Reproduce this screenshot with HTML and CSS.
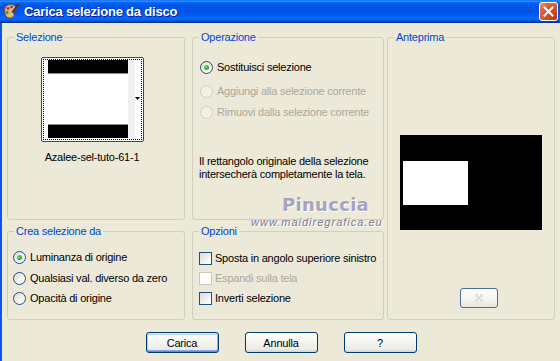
FILE: index.html
```html
<!DOCTYPE html>
<html lang="it">
<head>
<meta charset="utf-8">
<title>Carica selezione da disco</title>
<link rel="stylesheet" href="styles.css">
</head>
<body>
<div class="window">
  <div class="titlebar">
    <svg class="appicon" width="16" height="17" viewBox="0 0 16 17">
      <path d="M2 5 C3 1.5 9 0.5 12 3 C14 5 12 7 10.5 7.5 C9 8 10 10 11 11 C12 13 9 15.5 6 15 C2.5 14.5 0.8 9 2 5 Z" fill="#E9B47A" stroke="#8A4A1E" stroke-width="1"/>
      <circle cx="5" cy="5.5" r="1.4" fill="#D42A1C"/>
      <circle cx="8.5" cy="4" r="1.3" fill="#1E4FD0"/>
      <circle cx="4.2" cy="9.5" r="1.4" fill="#2F9A3A"/>
      <circle cx="7" cy="12.5" r="1.2" fill="#E8D020"/>
      <path d="M15 1.5 L9 10" stroke="#5A2E10" stroke-width="2" stroke-linecap="round"/>
      <path d="M9.5 9.5 L7.5 12.5" stroke="#C0C0C0" stroke-width="2"/>
    </svg>
    <span class="title">Carica selezione da disco</span>
    <div class="close">
      <svg width="11" height="11" viewBox="0 0 11 11"><path d="M1.5 1.5 L9.5 9.5 M9.5 1.5 L1.5 9.5" stroke="#fff" stroke-width="2" stroke-linecap="square"/></svg>
    </div>
  </div>
  <div class="content">
    <div class="groups">
      <fieldset class="sel">
        <legend>Selezione</legend>
        <div class="sel-in">
          <div class="thumb">
            <div class="thumb-in">
              <div class="img">
                <div class="bar"></div>
                <div class="line"></div>
                <div class="white"></div>
                <div class="line"></div>
                <div class="bar"></div>
              </div>
              <div class="strip"></div>
              <div class="arrowcol">
                <svg width="5" height="3" viewBox="0 0 5 3"><path d="M0 0 H5 L2.5 3 Z" fill="#000"/></svg>
              </div>
            </div>
          </div>
          <div class="sel-name">Azalee-sel-tuto-61-1</div>
        </div>
      </fieldset>

      <fieldset class="op">
        <legend>Operazione</legend>
        <div class="op-in">
          <div class="opt r1"><span class="radio"><span class="dot"></span></span><span>Sostituisci selezione</span></div>
          <div class="opt r2 disabled"><span class="radio"></span><span>Aggiungi alla selezione corrente</span></div>
          <div class="opt r3 disabled"><span class="radio"></span><span>Rimuovi dalla selezione corrente</span></div>
          <p class="note">Il rettangolo originale della selezione<br>intersecherà completamente la tela.</p>
        </div>
      </fieldset>

      <fieldset class="prev">
        <legend>Anteprima</legend>
        <div class="prev-in">
          <div class="canvas"><div class="sel-rect"></div></div>
          <div class="smallbtn">
            <svg width="14" height="8" viewBox="0 0 14 8">
              <rect x="3" y="0" width="3" height="3" fill="#E2E2DC"/>
              <rect x="8" y="0" width="3" height="3" fill="#E2E2DC"/>
              <rect x="5.5" y="2.5" width="3" height="3" fill="#D8D8D2"/>
              <rect x="3" y="5" width="3" height="3" fill="#E2E2DC"/>
              <rect x="8" y="5" width="3" height="3" fill="#E2E2DC"/>
            </svg>
          </div>
        </div>
      </fieldset>

      <fieldset class="crea">
        <legend>Crea selezione da</legend>
        <div class="crea-in">
          <div class="opt c1"><span class="radio"><span class="dot"></span></span><span>Luminanza di origine</span></div>
          <div class="opt c2"><span class="radio"></span><span>Qualsiasi val. diverso da zero</span></div>
          <div class="opt c3"><span class="radio"></span><span>Opacità di origine</span></div>
        </div>
      </fieldset>

      <fieldset class="opz">
        <legend>Opzioni</legend>
        <div class="opz-in">
          <div class="opt k1"><span class="check"></span><span>Sposta in angolo superiore sinistro</span></div>
          <div class="opt k2 disabled"><span class="check"></span><span>Espandi sulla tela</span></div>
          <div class="opt k3"><span class="check"></span><span>Inverti selezione</span></div>
        </div>
      </fieldset>
    </div>

    <div class="buttons">
      <button class="btn default">Carica</button>
      <button class="btn">Annulla</button>
      <button class="btn">?</button>
    </div>
  </div>

  <div class="wm-name">Pinuccia</div>
  <div class="wm-url">www.maidiregrafica.eu</div>
</div>
</body>
</html>
```

FILE: styles.css
```css
* { box-sizing: border-box; }

html, body {
  margin: 0;
  padding: 0;
}

body {
  width: 560px;
  height: 361px;
  overflow: hidden;
  background: #ECE9D8;
  font-family: "Liberation Sans", Arial, sans-serif;
  font-size: 11px;
  letter-spacing: -0.22px;
  color: #000;
}

.window {
  position: relative;
  width: 560px;
  height: 361px;
  background: #ECE9D8;
}

.titlebar {
  height: 23px;
  display: flex;
  align-items: center;
  padding-left: 3px;
  background: linear-gradient(to bottom, #0058EE 0%, #3593FF 4%, #288EFF 6%, #127DFF 8%, #036FFC 10%, #0262EE 14%, #0057E5 20%, #0054E3 24%, #0055EB 56%, #005BF5 66%, #026AFE 76%, #0062EF 86%, #0052D6 92%, #0040AB 94%, #003092 100%);
}

.appicon { flex: none; }

.title {
  margin-left: 5px;
  color: #fff;
  font-family: "Liberation Sans", Arial, sans-serif;
  font-weight: bold;
  font-size: 13px;
  text-shadow: 1px 1px 0 #0A1E8A;
  letter-spacing: -0.2px;
}

.close {
  margin-left: auto;
  margin-right: 2px;
  width: 19px;
  height: 19px;
  border: 1px solid #fff;
  border-radius: 3px;
  display: flex;
  align-items: center;
  justify-content: center;
  background: radial-gradient(circle at 85% 85%, #C0390F 0%, #D8502A 45%, #E06A46 75%, #EFA083 100%);
}

.content {
  border-left: 2px solid #0B56E4;
  padding: 8px 0 0 5px;
  height: 338px;
}

.groups {
  display: grid;
  grid-template-columns: 185px 195px 168px;
  grid-template-rows: 189px 95px;
  row-gap: 5px;
  width: 548px;
}

fieldset {
  margin: 0;
  padding: 0;
  border: 1px solid #D0D0BF;
  border-radius: 3px;
  min-width: 0;
}

legend {
  margin-left: 6px;
  padding: 0 2px;
  color: #0046D5;
  font-size: 11px;
  line-height: 13px;
}

.sel { grid-column: 1; grid-row: 1; margin-right: 7px; }
.op { grid-column: 2; grid-row: 1; margin-right: 3px; }
.prev { grid-column: 3; grid-row: 1 / 3; }
.crea { grid-column: 1; grid-row: 2; margin-right: 7px; }
.opz { grid-column: 2; grid-row: 2; margin-right: 3px; }

/* Selezione */
.sel-in {
  display: flex;
  flex-direction: column;
  align-items: center;
  padding: 13px 8px 0 0;
}

.thumb {
  width: 103px;
  height: 85px;
  border: 1px solid #2A4E7C;
  border-radius: 2px;
  background: #fff;
  padding: 1px;
}

.thumb-in {
  height: 100%;
  border: 1px dotted #000;
  display: flex;
}

.img {
  width: 84px;
  padding-left: 4px;
  display: flex;
  flex-direction: column;
  padding-bottom: 1px;
}

.bar { width: 80px; height: 13px; background: #000; flex: none; }
.line { width: 80px; height: 1px; background: #8A8A8A; flex: none; }
.white { flex: 1; }

.strip { width: 7px; background: #F0F0F0; }

.arrowcol {
  flex: 1;
  display: flex;
  align-items: center;
}

.arrowcol svg { display: block; margin-top: -2px; }

.sel-name {
  margin-top: 9px;
  line-height: 13px;
}

/* options */
.opt {
  display: flex;
  align-items: center;
  gap: 4px;
  height: 16px;
  white-space: nowrap;
}

.radio {
  width: 13px;
  height: 13px;
  flex: none;
  border-radius: 50%;
  border: 1px solid #1C5180;
  background: linear-gradient(135deg, #DCDCD7 0%, #F4F4F0 60%, #FFFFFF 100%);
  display: flex;
  align-items: center;
  justify-content: center;
}

.dot {
  width: 5px;
  height: 5px;
  border-radius: 50%;
  background: radial-gradient(circle at 35% 35%, #6CE26C 0%, #2FAF2F 60%, #1A8F1A 100%);
}

.check {
  width: 13px;
  height: 13px;
  flex: none;
  border: 1px solid #1C5180;
  background: linear-gradient(135deg, #DCDCD7 0%, #F4F4F0 60%, #FFFFFF 100%);
}

.disabled { color: #ACA899; }
.disabled .radio { border-color: #D2D0C4; background: #F3F1E6; }
.disabled .check { border-color: #CAC8BB; background: #FFFFFF; }

/* Operazione */
.op-in { padding: 15px 0 0 7px; }
.r2 { margin-top: 8px; }
.r3 { margin-top: 5px; }

.note {
  margin: 35px 0 0 -1px;
  line-height: 13px;
}

/* Anteprima */
.prev-in {
  display: flex;
  flex-direction: column;
  align-items: center;
}

.canvas {
  margin-top: 91px;
  width: 142px;
  height: 95px;
  background: #000;
  padding: 26px 0 0 3px;
}

.sel-rect {
  width: 65px;
  height: 44px;
  background: #fff;
}

.smallbtn {
  margin: 58px 0 0 16px;
  width: 38px;
  height: 20px;
  border: 1px solid #4A6E96;
  border-radius: 3px;
  background: linear-gradient(#FFFFFF, #F4F4F0 60%, #E6E4DA);
  display: flex;
  align-items: center;
  justify-content: center;
}

/* Crea selezione da */
.crea-in { padding: 11px 0 0 5px; }
.c2 { margin-top: 5px; }
.c3 { margin-top: 4px; }

/* Opzioni */
.opz-in { padding: 12px 0 0 6px; }
.opz .opt { gap: 3px; }
.k2 { margin-top: 4px; }
.k3 { margin-top: 4px; }

/* buttons */
.buttons {
  width: 548px;
  margin-top: 12px;
  display: flex;
  justify-content: center;
  gap: 26px;
}

.btn {
  width: 73px;
  height: 21px;
  padding: 0;
  border: 1px solid #003C74;
  border-radius: 3px;
  background: linear-gradient(#FFFFFF 0%, #F5F5F1 45%, #ECEBE6 85%, #D8D2C6 100%);
  font-family: "Liberation Sans", Arial, sans-serif;
  font-size: 11px;
  letter-spacing: -0.2px;
  color: #000;
}

.btn.default {
  box-shadow: inset 0 1px 0 #CEE7FF, inset 0 -1px 0 #6982EE, inset 1px 0 0 #B6CFF6, inset -1px 0 0 #8CA6EE, inset 0 2px 0 #BCD4F6, inset 0 -2px 0 #8DA6EC;
}

/* watermark */
.wm-name {
  position: absolute;
  left: 282px;
  top: 194px;
  font-family: "DejaVu Sans", sans-serif;
  font-size: 18px;
  font-weight: bold;
  color: #A4A4C2;
  text-shadow: 1px 1px 0 #FFFFFF;
  letter-spacing: 0.3px;
}

.wm-url {
  position: absolute;
  left: 251px;
  top: 216px;
  font-family: "Liberation Sans", Arial, sans-serif;
  font-style: italic;
  font-size: 11px;
  color: #7A7A98;
  text-shadow: 1px 1px 0 #FFFFFF;
  letter-spacing: 1px;
}
```
